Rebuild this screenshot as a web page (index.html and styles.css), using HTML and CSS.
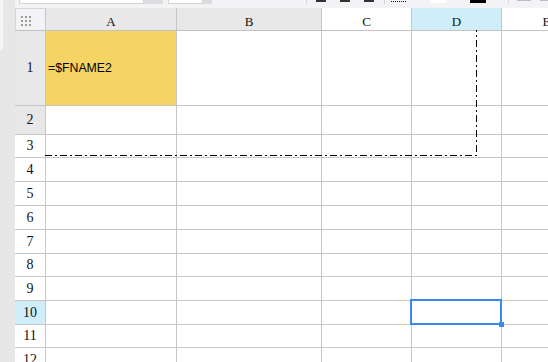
FILE: index.html
```html
<!DOCTYPE html>
<html>
<head>
<meta charset="utf-8">
<link rel="stylesheet" href="styles.css">
</head>
<body>
<div class="app">
  <aside class="side"><div class="side-panel"></div></aside>
  <main class="main">
    <div class="toolbar">
      <div class="tb-input w-font"><span class="tb-text">Arial</span></div><div class="tb-drop d-font"></div>
      <div class="tb-input w-size"></div><div class="tb-drop d-size"></div>
      <div class="tb-sep s-first"></div>
      <div class="tb-bar b1"></div><div class="tb-bar b2"></div><div class="tb-bar b2"></div>
      <div class="tb-sep s-second"></div>
      <div class="tb-dots"></div>
      <div class="tb-swatch sw-white"></div>
      <div class="tb-swatch sw-black"></div>
      <div class="tb-sep s-third"></div>
      <div class="tb-gray g1"></div><div class="tb-gray g2"></div>
    </div>
    <div class="sheet">
      <div class="corner">
        <svg class="dots" width="10" height="10" viewBox="0 0 10 10">
          <rect x="0" y="0" width="2" height="2"/><rect x="4" y="0" width="2" height="2"/><rect x="8" y="0" width="2" height="2"/>
          <rect x="0" y="4" width="2" height="2"/><rect x="4" y="4" width="2" height="2"/><rect x="8" y="4" width="2" height="2"/>
          <rect x="0" y="8" width="2" height="2"/><rect x="4" y="8" width="2" height="2"/><rect x="8" y="8" width="2" height="2"/>
        </svg>
      </div>
      <div class="ch hl">A</div><div class="ch hl">B</div><div class="ch">C</div><div class="ch act">D</div><div class="ch">E</div>

      <div class="rh hl">1</div><div class="cell a1">=$FNAME2</div><div class="cell"></div><div class="cell"></div><div class="cell"></div><div class="cell"></div>
      <div class="rh hl">2</div><div class="cell"></div><div class="cell"></div><div class="cell"></div><div class="cell"></div><div class="cell"></div>
      <div class="rh">3</div><div class="cell"></div><div class="cell"></div><div class="cell"></div><div class="cell"></div><div class="cell"></div>
      <div class="rh">4</div><div class="cell"></div><div class="cell"></div><div class="cell"></div><div class="cell"></div><div class="cell"></div>
      <div class="rh">5</div><div class="cell"></div><div class="cell"></div><div class="cell"></div><div class="cell"></div><div class="cell"></div>
      <div class="rh">6</div><div class="cell"></div><div class="cell"></div><div class="cell"></div><div class="cell"></div><div class="cell"></div>
      <div class="rh">7</div><div class="cell"></div><div class="cell"></div><div class="cell"></div><div class="cell"></div><div class="cell"></div>
      <div class="rh">8</div><div class="cell"></div><div class="cell"></div><div class="cell"></div><div class="cell"></div><div class="cell"></div>
      <div class="rh">9</div><div class="cell"></div><div class="cell"></div><div class="cell"></div><div class="cell"></div><div class="cell"></div>
      <div class="rh act">10</div><div class="cell"></div><div class="cell"></div><div class="cell"></div><div class="cell cur"><div class="cursor"><div class="handle"></div></div></div><div class="cell"></div>
      <div class="rh">11</div><div class="cell"></div><div class="cell"></div><div class="cell"></div><div class="cell"></div><div class="cell"></div>
      <div class="rh">12</div><div class="cell"></div><div class="cell"></div><div class="cell"></div><div class="cell"></div><div class="cell"></div>

      <svg class="marquee" width="433" height="127" viewBox="0 0 433 127">
        <path d="M0 125.5 H431.5 V0" fill="none" stroke="#000" stroke-width="1" stroke-dasharray="7 3 2 3" shape-rendering="crispEdges"/>
      </svg>
    </div>
  </main>
</div>
</body>
</html>
```

FILE: styles.css
```css
* { box-sizing: border-box; }

body {
  margin: 0;
  width: 548px;
  height: 362px;
  overflow: hidden;
  background: #e7e7e7;
  font-family: "Liberation Serif", "DejaVu Serif", serif;
}

.app {
  display: flex;
  height: 362px;
}

.side {
  width: 15px;
  flex: none;
  background: #e7e7e7;
}

.side-panel {
  width: 3px;
  height: 50px;
  background: #f5f5f7;
  border-radius: 0 0 3px 0;
}

.main {
  flex: 1;
  min-width: 0;
  display: flex;
  flex-direction: column;
  overflow: hidden;
}

/* toolbar (mostly scrolled off the top) */
.toolbar {
  height: 8px;
  flex: none;
  background: #f3f3f5;
  display: flex;
  align-items: flex-start;
  overflow: hidden;
}

.tb-input {
  height: 4px;
  background: #fff;
  border: 1px solid #d4d4d6;
  border-top: none;
  overflow: hidden;
  flex: none;
}
.w-font { margin-left: 4px; width: 125px; }
.w-size { margin-left: 5px; width: 35px; }

.tb-text {
  display: block;
  font: 11px/11px "Liberation Sans", sans-serif;
  margin-top: -9px;
  padding-left: 6px;
  color: #222;
}

.tb-drop {
  height: 4px;
  background: #dcdcdf;
  flex: none;
}
.d-font { width: 19px; }
.d-size { width: 9px; }

.tb-sep {
  width: 1px;
  height: 4px;
  background: #d6d6d8;
  flex: none;
}
.s-first { margin-left: 94px; }
.s-second { margin-left: 10px; }
.s-third { margin-left: 22px; }

.tb-bar {
  width: 10px;
  height: 2px;
  background: #333;
  flex: none;
}
.b1 { margin-left: 9px; }
.b2 { margin-left: 14px; }

.tb-dots {
  margin-left: 6px;
  margin-top: 1px;
  width: 15px;
  height: 0;
  border-top: 1px dotted #111;
  flex: none;
}

.tb-swatch {
  margin-left: 24px;
  width: 16px;
  height: 3px;
  flex: none;
}
.sw-white { background: #fff; }
.sw-black { background: #000; }

.tb-gray {
  height: 1px;
  background: #bdbdbf;
  flex: none;
}
.g1 { margin-left: 8px; width: 14px; }
.g2 { margin-left: 9px; width: 10px; }

/* sheet grid */
.sheet {
  position: relative;
  display: grid;
  grid-template-columns: 31px 131px 145px 90px 90px 90px;
  grid-template-rows: 23px 75px 29px 23px 24px 24px 24px 24px 23px 24px 24px 23px 24px;
  background: #fff;
}

.corner {
  background: #f3f3f5;
  border: 1px solid #d6d6d8;
  border-right-color: #c6c6c6;
  border-bottom-color: #c2c2c2;
  display: flex;
  align-items: center;
  padding-left: 5px;
  padding-top: 2px;
}
.dots { fill: #9c9c9c; display: block; }

.ch {
  border-right: 1px solid #c6c6c6;
  border-bottom: 1px solid #c2c2c2;
  background: #fff;
  display: flex;
  align-items: flex-end;
  justify-content: center;
  padding-bottom: 2px;
  font-size: 13px;
  line-height: 13px;
  color: #111;
}

.rh {
  border-right: 1px solid #c6c6c6;
  border-bottom: 1px solid #c6c6c6;
  background: #fff;
  display: flex;
  align-items: center;
  justify-content: center;
  font-size: 14px;
  line-height: 14px;
  color: #111;
}

.hl { background: #e8e8e8; }
.act { background: #cfeef9; }

.cell {
  border-right: 1px solid #c6c6c6;
  border-bottom: 1px solid #c6c6c6;
  background: #fff;
}

.a1 {
  background: #f5d463;
  display: flex;
  align-items: center;
  padding-left: 2px;
  font: 12.3px "Liberation Sans", Arial, sans-serif;
  color: #000;
}

.cur { position: relative; }

.cursor {
  position: absolute;
  top: -2px;
  left: -2px;
  right: -1px;
  bottom: -1px;
  border: 2px solid #3a87ee;
}

.handle {
  position: absolute;
  right: -4px;
  bottom: -4px;
  width: 5px;
  height: 5px;
  background: #3a87ee;
}

.marquee {
  position: absolute;
  left: 30px;
  top: 22px;
  pointer-events: none;
}
```
